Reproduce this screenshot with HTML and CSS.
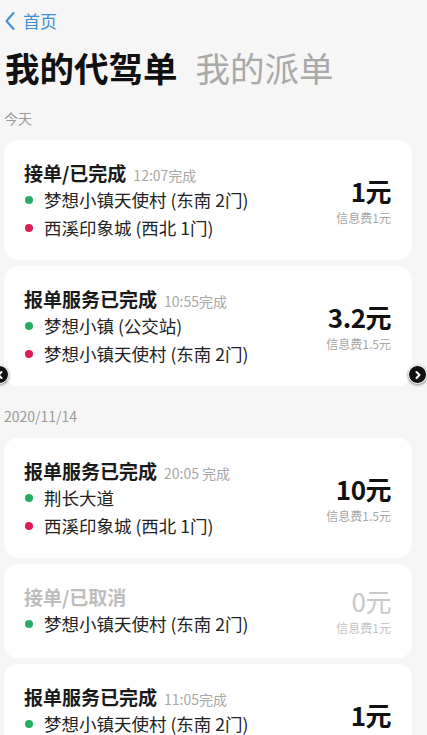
FILE: index.html
```html
<!DOCTYPE html>
<html lang="zh-CN">
<head>
<meta charset="utf-8">
<title>我的代驾单</title>
<link rel="stylesheet" href="styles.css">
</head>
<body>
<div class="page">
  <div class="topbar">
    <svg class="back-icon" width="12" height="20" viewBox="0 0 12 20"><path d="M9.5 2 L2.5 10 L9.5 18" fill="none" stroke="#3f8fd6" stroke-width="2" stroke-linecap="round" stroke-linejoin="round"/></svg>
    <span class="back-text">首页</span>
  </div>
  <div class="title-row">
    <span class="tab tab-active">我的代驾单</span>
    <span class="tab">我的派单</span>
  </div>

  <div class="section-label">今天</div>
  <div class="list">
    <div class="card">
      <div class="card-main">
        <div class="card-title">接单/已完成<span class="time">12:07完成</span></div>
        <div class="addr"><i class="dot green"></i>梦想小镇天使村 (东南 2门)</div>
        <div class="addr"><i class="dot red"></i>西溪印象城 (西北 1门)</div>
      </div>
      <div class="price">
        <div class="amount">1元</div>
        <div class="fee">信息费1元</div>
      </div>
    </div>
    <div class="card">
      <div class="card-main">
        <div class="card-title">报单服务已完成<span class="time">10:55完成</span></div>
        <div class="addr"><i class="dot green"></i>梦想小镇 (公交站)</div>
        <div class="addr"><i class="dot red"></i>梦想小镇天使村 (东南 2门)</div>
      </div>
      <div class="price">
        <div class="amount">3.2元</div>
        <div class="fee">信息费1.5元</div>
      </div>
    </div>
  </div>

  <div class="section-label section-date">2020/11/14</div>
  <div class="list">
    <div class="card">
      <div class="card-main">
        <div class="card-title">报单服务已完成<span class="time">20:05 完成</span></div>
        <div class="addr"><i class="dot green"></i>荆长大道</div>
        <div class="addr"><i class="dot red"></i>西溪印象城 (西北 1门)</div>
      </div>
      <div class="price">
        <div class="amount">10元</div>
        <div class="fee">信息费1.5元</div>
      </div>
    </div>
    <div class="card card-cancelled">
      <div class="card-main">
        <div class="card-title">接单/已取消</div>
        <div class="addr"><i class="dot green"></i>梦想小镇天使村 (东南 2门)</div>
      </div>
      <div class="price">
        <div class="amount">0元</div>
        <div class="fee">信息费1元</div>
      </div>
    </div>
    <div class="card">
      <div class="card-main">
        <div class="card-title">报单服务已完成<span class="time">11:05完成</span></div>
        <div class="addr"><i class="dot green"></i>梦想小镇天使村 (东南 2门)</div>
        <div class="addr"><i class="dot red"></i>西溪印象城 (西北 1门)</div>
      </div>
      <div class="price">
        <div class="amount">1元</div>
        <div class="fee">信息费1元</div>
      </div>
    </div>
  </div>
</div>

<div class="nav-arrow nav-left">
  <svg width="10" height="10" viewBox="0 0 10 10"><path d="M6.5 2 L3.5 5 L6.5 8" fill="none" stroke="#fff" stroke-width="2" stroke-linecap="round" stroke-linejoin="round"/></svg>
</div>
<div class="nav-arrow nav-right">
  <svg width="10" height="10" viewBox="0 0 10 10"><path d="M3.5 2 L6.5 5 L3.5 8" fill="none" stroke="#fff" stroke-width="2" stroke-linecap="round" stroke-linejoin="round"/></svg>
</div>
</body>
</html>
```

FILE: styles.css
```css
* { box-sizing: border-box; }

html, body {
  margin: 0;
  padding: 0;
  background: #f6f6f6;
  font-family: "Noto Sans CJK SC", "Noto Sans", sans-serif;
  color: #1a1a1a;
  overflow: hidden;
}

.page {
  padding: 0 15px 0 4px;
}

.topbar {
  height: 42px;
  display: flex;
  align-items: center;
  gap: 7px;
}

.back-icon { display: block; }

.back-text {
  font-size: 17px;
  line-height: 20px;
  color: #3f8fd6;
}

.title-row {
  display: flex;
  align-items: center;
  gap: 18px;
  height: 50px;
  padding-left: 1px;
}

.tab {
  font-size: 34.5px;
  line-height: 50px;
  color: #a9a9a9;
  font-weight: 400;
}

.tab-active {
  color: #111;
  font-weight: 700;
}

.section-label {
  margin-top: 16px;
  margin-bottom: 12px;
  font-size: 14px;
  line-height: 20px;
  color: #9a9a9a;
}

.section-date {
  margin-top: 20px;
}

.list {
  display: flex;
  flex-direction: column;
  gap: 6px;
}

.card {
  background: #fff;
  border-radius: 14px;
  padding: 20px 21px 18px 20px;
  display: flex;
  align-items: center;
  justify-content: space-between;
  box-shadow: 0 0 1px rgba(0,0,0,0.04);
}

.card-main {
  display: flex;
  flex-direction: column;
}

.card-title {
  height: 26px;
  font-size: 19px;
  line-height: 26px;
  font-weight: 700;
  color: #1a1a1a;
  white-space: nowrap;
}

.time {
  font-size: 14px;
  line-height: 14px;
  font-weight: 400;
  color: #a8a8a8;
  margin-left: 7px;
}

.addr {
  height: 28px;
  font-size: 17.5px;
  line-height: 28px;
  color: #222;
  display: flex;
  align-items: center;
  white-space: nowrap;
}

.dot {
  width: 8px;
  height: 8px;
  border-radius: 50%;
  margin-left: 1px;
  margin-right: 11px;
  flex: none;
}

.green { background: #25ad64; }
.red { background: #dc1d55; }

.price {
  display: flex;
  flex-direction: column;
  align-items: flex-end;
  gap: 5px;
}

.amount {
  font-size: 26px;
  line-height: 28px;
  font-weight: 600;
  color: #111;
  letter-spacing: -0.5px;
}

.fee {
  font-size: 12px;
  line-height: 16px;
  color: #a6a6a6;
}

.card-cancelled { padding-bottom: 20px; }
.card-cancelled .card-title { color: #bdbdbd; }
.card-cancelled .amount { color: #c8c8c8; font-weight: 400; }
.card-cancelled .fee { color: #c4c4c4; }

.nav-arrow {
  position: fixed;
  top: 365px;
  width: 19px;
  height: 19px;
  border-radius: 50%;
  background: #111;
  border: 1.5px solid #fff;
  box-shadow: 0 1px 3px rgba(0,0,0,0.5);
  display: flex;
  align-items: center;
  justify-content: center;
}

.nav-left { left: -10px; }
.nav-right { left: 408px; }
```
